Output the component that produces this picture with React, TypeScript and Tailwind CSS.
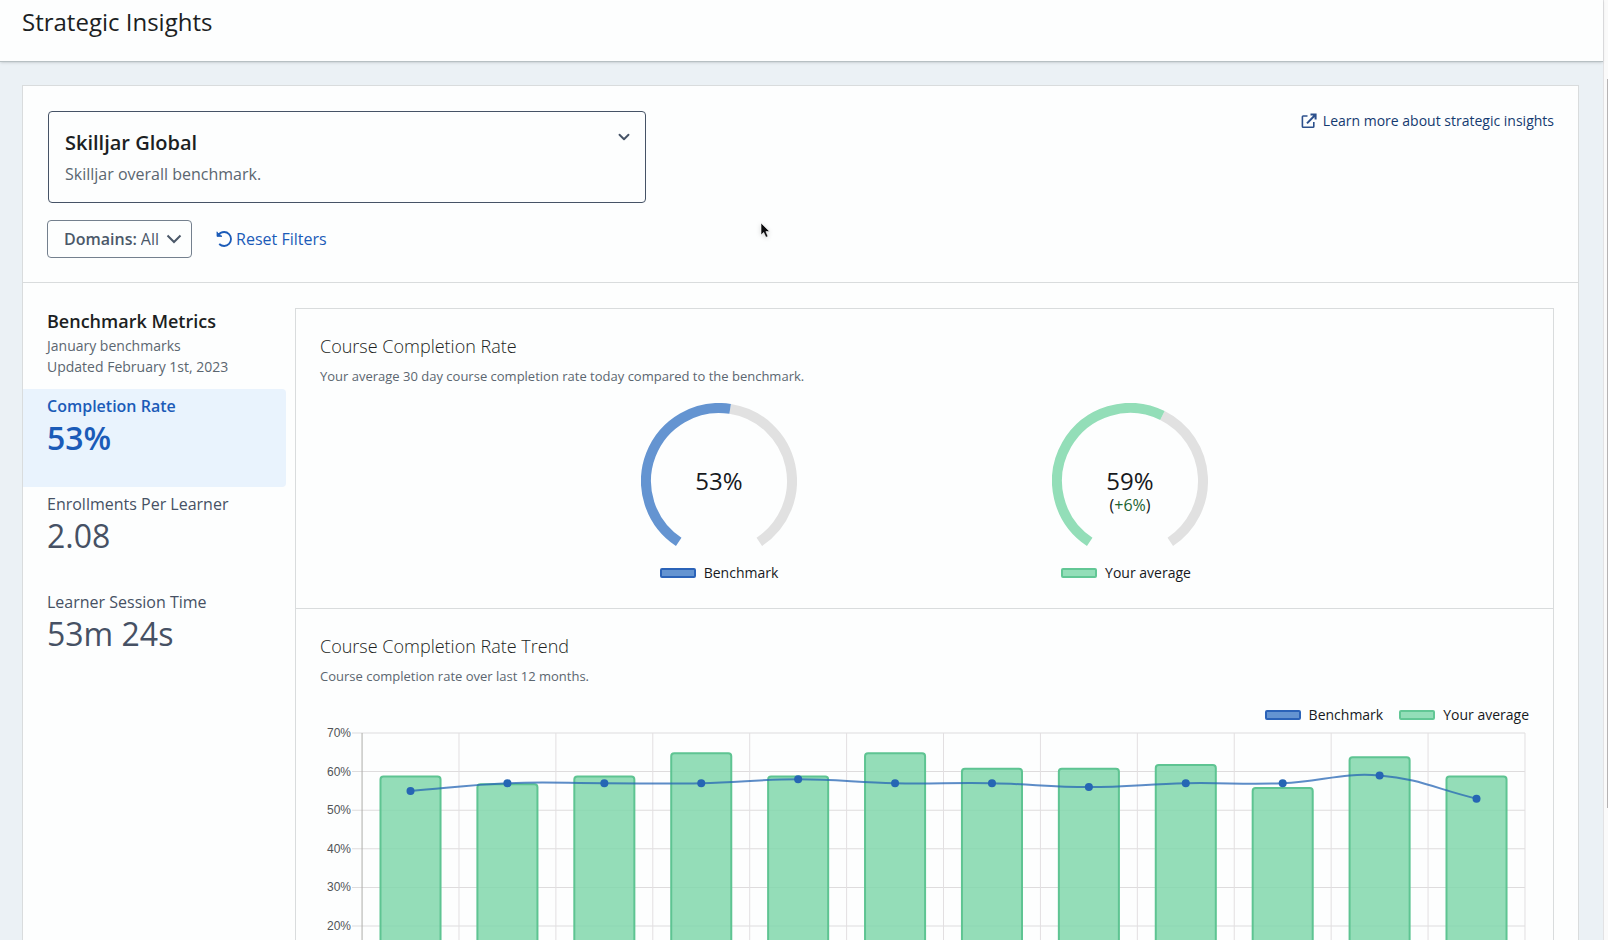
import React from 'react';
import { ChevronDown } from 'lucide-react';

interface Metric {
  label: string;
  value: string;
}

interface GaugeProps {
  percent: number;
  delta?: string;
  label: string;
  color: string;
  children: React.ReactNode;
}

interface Point {
  x: number;
  y: number;
}

const metrics: Metric[] = [
  { label: 'Completion Rate', value: '53%' },
  { label: 'Enrollments Per Learner', value: '2.08' },
  { label: 'Learner Session Time', value: '53m 24s' },
];

const averages = [59, 57, 59, 65, 59, 65, 61, 61, 62, 56, 64, 59];
const benchmarks = [55, 57, 57, 57, 58, 57, 57, 56, 57, 57, 59, 53];
const ticks = [70, 60, 50, 40, 30, 20];

// Trend chart geometry, in viewBox units
const PLOT = { left: 42, right: 1204, top: 8, bottom: 278 };
const COLUMN = (PLOT.right - PLOT.left) / averages.length;
const BAR_WIDTH = 60;

const yFor = (value: number) => PLOT.bottom - (value / 70) * (PLOT.bottom - PLOT.top);
const xFor = (index: number) => PLOT.left + COLUMN * (index + 0.5);

// Smooth line through the points, control handles weighted by segment length
const splinePath = (points: Point[], tension = 0.4) => {
  const handles = points.map((p, i) => {
    const prev = points[i - 1] ?? p;
    const next = points[i + 1] ?? p;
    const before = Math.hypot(p.x - prev.x, p.y - prev.y);
    const after = Math.hypot(next.x - p.x, next.y - p.y);
    const a = (tension * before) / (before + after);
    const b = (tension * after) / (before + after);
    return {
      in: { x: p.x - a * (next.x - prev.x), y: p.y - a * (next.y - prev.y) },
      out: { x: p.x + b * (next.x - prev.x), y: p.y + b * (next.y - prev.y) },
    };
  });
  return points.reduce((path, p, i) => {
    if (i === 0) return `M${p.x},${p.y}`;
    const from = handles[i - 1].out;
    const to = handles[i].in;
    return `${path} C${from.x},${from.y} ${to.x},${to.y} ${p.x},${p.y}`;
  }, '');
};

// Gauge arcs sweep 293 degrees, angle 0 points up
const SWEEP = 293;

const arcPath = (start: number, end: number) => {
  const at = (deg: number) => {
    const rad = (deg * Math.PI) / 180;
    return `${78 + 73 * Math.sin(rad)},${78 - 73 * Math.cos(rad)}`;
  };
  return `M${at(start)} A73,73 0 ${end - start > 180 ? 1 : 0} 1 ${at(end)}`;
};

const BenchmarkKey = () => (
  <span className="flex items-center gap-2 text-sm text-[#16191d]">
    <span className="w-9 h-[10px] rounded-xs border-2 border-[#2b63b8] bg-[#6494d1]"></span>
    Benchmark
  </span>
);

const AverageKey = () => (
  <span className="flex items-center gap-2 text-sm text-[#16191d]">
    <span className="w-9 h-[10px] rounded-xs border-2 border-[#62c795] bg-[#93deb8]"></span>
    Your average
  </span>
);

const Gauge: React.FC<GaugeProps> = ({ percent, delta, label, color, children }) => {
  const split = -SWEEP / 2 + (SWEEP * percent) / 100;
  return (
    <div className="w-1/3 flex flex-col items-center">
      <div className="relative">
        <svg width="156" height="156" viewBox="0 0 156 156" fill="none" strokeWidth="10" role="img" aria-label={label}>
          <path d={arcPath(split, SWEEP / 2)} stroke="#e1e1e1" />
          <path d={arcPath(-SWEEP / 2, split)} stroke={color} />
        </svg>
        <div className="absolute inset-0 flex flex-col items-center pt-16 text-[#16191d]">
          <span className="text-2xl leading-7">{percent}%</span>
          {delta && (
            <span className="text-base leading-5">
              (<span className="text-[#1d6331]">{delta}</span>)
            </span>
          )}
        </div>
      </div>
      <div className="mt-1">{children}</div>
    </div>
  );
};

const TrendChart = () => {
  const points = benchmarks.map((value, i) => ({ x: xFor(i), y: yFor(value) }));
  return (
    <svg viewBox="0 0 1208 300" className="w-full block" role="img" aria-label="Course completion rate by month">
      {ticks.map((tick) => (
        <g key={tick}>
          <line x1={PLOT.left - 10} x2={PLOT.right} y1={yFor(tick)} y2={yFor(tick)} stroke="#dedcdd" />
          <text x={PLOT.left - 11} y={yFor(tick) + 4} textAnchor="end" className="font-['Liberation_Sans',sans-serif] text-xs" fill="#515457">
            {tick}%
          </text>
        </g>
      ))}
      {averages.map((_, i) => (
        <line key={i} x1={PLOT.left + COLUMN * (i + 1)} x2={PLOT.left + COLUMN * (i + 1)} y1={PLOT.top} y2={PLOT.bottom} stroke="#e2dfe1" />
      ))}
      <line x1={PLOT.left} x2={PLOT.left} y1={PLOT.top} y2={PLOT.bottom} stroke="#adadaa" />
      {averages.map((value, i) => {
        const left = xFor(i) - BAR_WIDTH / 2;
        const right = xFor(i) + BAR_WIDTH / 2;
        const top = yFor(value) + 1;
        return (
          <path
            key={i}
            d={`M${left},${PLOT.bottom} V${top + 3} Q${left},${top} ${left + 3},${top} H${right - 3} Q${right},${top} ${right},${top + 3} V${PLOT.bottom}`}
            fill="#7fd7aa"
            fillOpacity="0.84"
            stroke="#5ec492"
            strokeWidth="2"
          />
        );
      })}
      <path d={splinePath(points)} fill="none" stroke="#2666b4" strokeOpacity="0.75" strokeWidth="2" />
      {points.map((p, i) => (
        <circle key={i} cx={p.x} cy={p.y} r="4" fill="#2666b4" />
      ))}
    </svg>
  );
};

const App = () => {
  return (
    <div className="h-screen flex overflow-hidden bg-[#ebf1f5] font-['Open_Sans',sans-serif] text-[#1c1f23]">
      <div className="relative flex-1 min-w-0">
        <header className="h-[62px] px-[22px] pt-[6px] bg-[#fdfefe] border-b border-[#b7c0c3] shadow-sm">
          <h1 className="text-2xl leading-8">Strategic Insights</h1>
        </header>

        <main className="mt-[23px] ml-[22px] mr-6 bg-[#fdfefe] border border-[#d9dcdd]">
          {/* Benchmark picker and filters */}
          <section className="px-6 pt-[25px] pb-6 border-b border-[#d9dcdd]">
            <div className="flex items-start justify-between">
              <label className="w-[598px] flex flex-col gap-[5px] ml-px px-4 pt-[17px] pb-4 rounded border border-[#465366]">
                <span className="flex items-center justify-between">
                  <select aria-label="Benchmark" className="appearance-none flex-1 text-xl leading-7 font-semibold outline-none">
                    <option>Skilljar Global</option>
                  </select>
                  <ChevronDown className="w-[18px] h-[18px] -mt-3 -mr-1 text-[#465366]" strokeWidth={2.5} />
                </span>
                <span className="text-base leading-6 text-[#5b6670]">Skilljar overall benchmark.</span>
              </label>
              <a href="#learn-more" className="flex items-center gap-[6px] text-sm leading-5 text-[#143a70]">
                <svg width="16" height="16" viewBox="0 0 16 16" fill="none" stroke="#2c508c" strokeWidth="1.6">
                  <path d="M6.5 3H2.2Q1.4 3 1.4 3.8V13.4Q1.4 14.2 2.2 14.2H12Q12.8 14.2 12.8 13.4V9" />
                  <path d="M9.5 1.5H14.6V6.6M14.4 1.7L6 10.4" strokeWidth="2" />
                </svg>
                Learn more about strategic insights
              </a>
            </div>

            <div className="mt-[17px] flex items-center gap-6">
              <label className="h-[38px] flex items-center pl-4 pr-[9px] rounded border border-[#74808e] text-base text-[#4b5869]">
                <span className="font-semibold">Domains:</span>
                <select className="appearance-none field-sizing-content ml-1 outline-none">
                  <option>All</option>
                </select>
                <svg width="16" height="16" viewBox="0 0 16 16" fill="none" stroke="#4b5869" strokeWidth="2" className="ml-[7px]">
                  <path d="M1.5 4.5L8 11L14.5 4.5" />
                </svg>
              </label>
              <button className="flex items-center gap-1 text-base text-[#1b5bb8]">
                <svg width="16" height="16" viewBox="0 0 16 16" fill="none" stroke="currentColor" strokeWidth="1.8">
                  <path d="M1.8 4.6C3.6 2 6 1 8.2 1C12 1 15 4.1 15 7.9C15 11.8 12 15 8.2 15C6.2 15 4.6 14.3 3.2 13" />
                  <path d="M1 0.8V5.4H6L1.2 1.4Z" fill="currentColor" strokeWidth="0.8" />
                </svg>
                Reset Filters
              </button>
            </div>
          </section>

          <section className="flex gap-[9px] pt-[25px] pr-6">
            {/* Metric list */}
            <aside className="w-[263px] shrink-0">
              <div className="px-6 pb-3 text-sm leading-[21px] text-[#5b6670]">
                <h2 className="text-lg leading-[27px] font-semibold text-[#1c1f23]">Benchmark Metrics</h2>
                <p>January benchmarks</p>
                <p>Updated February 1st, 2023</p>
              </div>
              {metrics.map((metric, index) => (
                <button
                  key={metric.label}
                  className={`w-full h-[98px] flex flex-col px-6 pt-[5px] rounded-r text-left ${index === 0 ? 'bg-[#e9f3fd] text-[#1b5bb8] font-semibold' : 'text-[#465164]'}`}
                >
                  <span className="text-base leading-6">{metric.label}</span>
                  <span className="text-[32px] leading-10">{metric.value}</span>
                </button>
              ))}
            </aside>

            <div className="flex-1 min-w-0 border border-[#d9dcdd]">
              <div className="px-6 pt-6 pb-6 h-[300px] border-b border-[#d9dcdd]">
                <h3 className="text-lg leading-[27px] font-light">Course Completion Rate</h3>
                <p className="mt-[6px] text-[13px] leading-5 text-[#5b6670]">
                  Your average 30 day course completion rate today compared to the benchmark.
                </p>
                <div className="mt-[17px] -mx-3 flex justify-center">
                  <Gauge percent={53} label="Benchmark 53%" color="#6494d1">
                    <BenchmarkKey />
                  </Gauge>
                  <Gauge percent={59} delta="+6%" label="Your average 59%" color="#93deb8">
                    <div className="pr-2">
                      <AverageKey />
                    </div>
                  </Gauge>
                </div>
              </div>

              <div className="px-6 pt-6">
                <h3 className="text-lg leading-[27px] font-light">Course Completion Rate Trend</h3>
                <p className="mt-[6px] text-[13px] leading-5 text-[#5b6670]">Course completion rate over last 12 months.</p>
                <div className="mt-[19px] flex justify-end gap-4">
                  <BenchmarkKey />
                  <AverageKey />
                </div>
                <TrendChart />
              </div>
            </div>
          </section>
        </main>

        {/* Mouse pointer */}
        <svg width="12" height="18" viewBox="0 0 12 18" className="absolute left-[760px] top-[222px] drop-shadow-sm">
          <path d="M1 1V13L3.7 10.4L5.9 15.3L8 14.4L5.9 9.6H9.6Z" fill="#0c0c0e" stroke="#fff" strokeWidth="0.6" />
        </svg>
      </div>

      {/* Scroll track */}
      <div className="w-[5px] h-full shrink-0 flex justify-end bg-[#fafafa] border-l border-[#e2e2e4]">
        <div className="mt-[79px] w-px h-[729px] bg-[#b5b3b4]"></div>
      </div>
    </div>
  );
};

export default App;
